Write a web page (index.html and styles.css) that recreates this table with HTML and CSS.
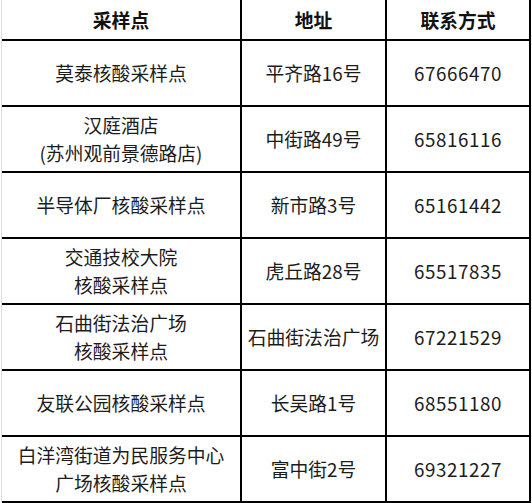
FILE: index.html
```html
<!DOCTYPE html>
<html lang="zh-CN">
<head>
<meta charset="utf-8">
<title>核酸采样点</title>
<link rel="stylesheet" href="styles.css">
</head>
<body>
<div class="sheet">
  <div class="cell head">采样点</div>
  <div class="cell head">地址</div>
  <div class="cell head">联系方式</div>

  <div class="cell">莫泰核酸采样点</div>
  <div class="cell">平齐路16号</div>
  <div class="cell num">67666470</div>

  <div class="cell">汉庭酒店<br>(苏州观前景德路店)</div>
  <div class="cell">中街路49号</div>
  <div class="cell num">65816116</div>

  <div class="cell">半导体厂核酸采样点</div>
  <div class="cell">新市路3号</div>
  <div class="cell num">65161442</div>

  <div class="cell">交通技校大院<br>核酸采样点</div>
  <div class="cell">虎丘路28号</div>
  <div class="cell num">65517835</div>

  <div class="cell">石曲街法治广场<br>核酸采样点</div>
  <div class="cell">石曲街法治广场</div>
  <div class="cell num">67221529</div>

  <div class="cell">友联公园核酸采样点</div>
  <div class="cell">长吴路1号</div>
  <div class="cell num">68551180</div>

  <div class="cell">白洋湾街道为民服务中心<br>广场核酸采样点</div>
  <div class="cell">富中街2号</div>
  <div class="cell num">69321227</div>
</div>
</body>
</html>
```

FILE: styles.css
```css
html, body {
  margin: 0;
  padding: 0;
  background: #ffffff;
}

.sheet {
  margin-left: 1px;
  width: 530px;
  display: grid;
  grid-template-columns: 240px 145px 144px;
  grid-template-rows: 41px repeat(7, 66px);
  border-left: 1px solid #dcdcdc;
  font-family: "Noto Sans CJK SC", "Noto Sans", sans-serif;
  font-size: 18.8px;
  line-height: 28px;
  color: #1c1c1c;
}

.cell {
  display: flex;
  align-items: center;
  justify-content: center;
  text-align: center;
  border-right: 2px solid #000;
  border-bottom: 2px solid #000;
  white-space: nowrap;
}

.num {
  letter-spacing: 0.6px;
}

.head {
  font-weight: 700;
  color: #111;
}
```
